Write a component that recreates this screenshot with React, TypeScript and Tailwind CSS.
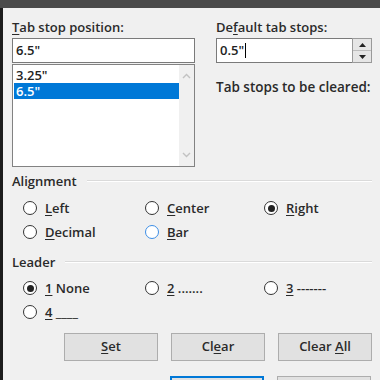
import React from "react";

const F = { fontFamily: '"Open Sans", "Noto Sans", sans-serif' };

function U({ children }: { children: React.ReactNode }) {
  return <span className="underline decoration-[1px] underline-offset-2">{children}</span>;
}

function Radio({ checked, hover, children }: { checked?: boolean; hover?: boolean; children: React.ReactNode }) {
  return (
    <div className="flex items-center h-[24px]">
      <div
        className={
          "w-[14px] h-[14px] rounded-full bg-white flex items-center justify-center border-[1.5px] " +
          (hover ? "border-[#3d8ee6]" : "border-[#333333]")
        }
      >
        {checked && <div className="w-[7px] h-[7px] rounded-full bg-[#222222]" />}
      </div>
      <span className="ml-[8px] text-[13px] leading-[16px] font-semibold text-[#2a2a2a]">{children}</span>
    </div>
  );
}

function Group({ title }: { title: string }) {
  return (
    <div className="flex items-center h-[16px]">
      <span className="text-[13px] leading-[16px] font-semibold text-[#2a2a2a]">{title}</span>
      <div className="flex-1 ml-[10px] mr-[8px] h-[2px] border-t border-[#dadada] border-b border-b-white" />
    </div>
  );
}

function Btn({ children, def }: { children?: React.ReactNode; def?: boolean }) {
  return (
    <div
      className={
        "w-[94px] h-[28px] flex items-center justify-center bg-[#e1e1e1] text-[13px] font-semibold text-[#2a2a2a] " +
        (def ? "border-2 border-[#0078d7]" : "border border-[#adadad]")
      }
    >
      <span>{children}</span>
    </div>
  );
}

export default function App() {
  return (
    <div className="w-[380px] h-[380px] overflow-hidden flex flex-col bg-[#f0f0f0]" style={F}>
      <div className="h-[8px] bg-[#4a4a4a] shrink-0" />
      <div className="flex flex-1">
        <div className="w-[3px] bg-[#1c1c1c] shrink-0" />
        <div className="flex-1 pl-[9px] flex flex-col">
          <div className="flex mt-[11px]">
            <div className="w-[183px] flex flex-col">
              <div className="text-[13px] leading-[16px] font-semibold text-[#2a2a2a]">
                <U>T</U>ab stop position:
              </div>
              <div className="mt-[3px] h-[25px] bg-white border border-[#7a7a7a] flex items-center pl-[3px] text-[13px] font-semibold text-[#222]">
                6.5"
              </div>
              <div className="mt-[1px] h-[103px] bg-white border border-[#828282] flex">
                <div className="flex-1 pt-[2px] pl-[1px]">
                  <div className="h-[16px] leading-[16px] pl-[2px] text-[13px] font-semibold text-[#222]">3.25"</div>
                  <div className="h-[16px] leading-[16px] pl-[2px] text-[13px] font-semibold text-white bg-[#0078d7]">6.5"</div>
                </div>
                <div className="w-[15px] bg-[#f0f0f0] flex flex-col items-center justify-between py-[8px]">
                  <svg width="9" height="6" viewBox="0 0 9 6">
                    <path d="M1 5 L4.5 1.5 L8 5" fill="none" stroke="#c2c2c2" strokeWidth="1.4" />
                  </svg>
                  <svg width="9" height="6" viewBox="0 0 9 6">
                    <path d="M1 1 L4.5 4.5 L8 1" fill="none" stroke="#c2c2c2" strokeWidth="1.4" />
                  </svg>
                </div>
              </div>
            </div>
            <div className="ml-[21px] flex flex-col">
              <div className="text-[13px] leading-[16px] font-semibold text-[#2a2a2a]">
                De<U>f</U>ault tab stops:
              </div>
              <div className="mt-[3px] flex h-[25px] w-[156px]">
                <div className="flex-1 bg-white border border-[#7a7a7a] border-r-0 flex items-center pl-[3px] text-[13px] font-semibold text-[#222]">
                  <span>0.5"</span>
                  <span className="inline-block w-[1px] h-[15px] bg-black ml-[1px]" />
                </div>
                <div className="w-[20px] flex flex-col border border-[#9a9a9a] bg-[#e6e6e6]">
                  <div className="flex-1 flex items-center justify-center border-b border-[#bdbdbd]">
                    <svg width="7" height="4" viewBox="0 0 7 4"><path d="M0 4 L3.5 0 L7 4Z" fill="#222" /></svg>
                  </div>
                  <div className="flex-1 flex items-center justify-center">
                    <svg width="7" height="4" viewBox="0 0 7 4"><path d="M0 0 L3.5 4 L7 0Z" fill="#222" /></svg>
                  </div>
                </div>
              </div>
              <div className="mt-[16px] text-[13.5px] leading-[16px] font-semibold text-[#2a2a2a]">
                Tab stops to be cleared:
              </div>
            </div>
          </div>

          <div className="mt-[6px]">
            <Group title="Alignment" />
          </div>
          <div className="mt-[7px] pl-[11px] grid grid-cols-[122px_119px_1fr]">
            <Radio><U>L</U>eft</Radio>
            <Radio><U>C</U>enter</Radio>
            <Radio checked><U>R</U>ight</Radio>
            <Radio><U>D</U>ecimal</Radio>
            <Radio hover><U>B</U>ar</Radio>
            <div />
          </div>

          <div className="mt-[10px]">
            <Group title="Leader" />
          </div>
          <div className="mt-[6px] pl-[11px] grid grid-cols-[122px_119px_1fr]">
            <Radio checked><U>1</U> None</Radio>
            <Radio><U>2</U> .......</Radio>
            <Radio><U>3</U> -------</Radio>
            <Radio><U>4</U> ____</Radio>
            <div />
            <div />
          </div>

          <div className="mt-[9px] ml-[52px] flex gap-[13px]">
            <Btn><U>S</U>et</Btn>
            <Btn>Cl<U>e</U>ar</Btn>
            <Btn>Clear <U>A</U>ll</Btn>
          </div>
          <div className="mt-[15px] ml-[158px] flex gap-[13px]">
            <Btn def />
            <Btn />
          </div>
        </div>
      </div>
    </div>
  );
}
